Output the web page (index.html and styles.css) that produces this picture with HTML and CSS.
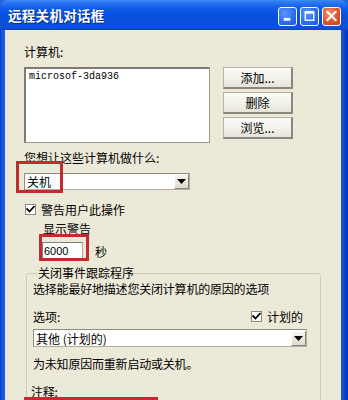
FILE: index.html
```html
<!DOCTYPE html>
<html lang="zh">
<head>
<meta charset="utf-8">
<title>远程关机对话框</title>
<link rel="stylesheet" href="styles.css">
</head>
<body>
<div class="window">
  <div class="titlebar">
    <span class="title">远程关机对话框</span>
    <div class="tbtns">
      <span class="tbtn"><svg width="18" height="18" viewBox="0 0 18 18"><rect x="5" y="11" width="7" height="3" fill="#fff"/></svg></span>
      <span class="tbtn"><svg width="18" height="18" viewBox="0 0 18 18"><rect x="4.5" y="4.5" width="9" height="9" fill="none" stroke="#fff" stroke-width="1.4"/><rect x="4.5" y="4.5" width="9" height="2" fill="#fff"/></svg></span>
      <span class="tbtn close"><svg width="18" height="18" viewBox="0 0 18 18"><path d="M4.5 4.5 L13.5 13.5 M13.5 4.5 L4.5 13.5" stroke="#fff" stroke-width="2.2" stroke-linecap="round"/></svg></span>
    </div>
  </div>
  <div class="client">
    <div class="label">计算机:</div>
    <div class="row-list">
      <div class="listbox">microsof-3da936</div>
      <div class="btncol">
        <div class="btn">添加...</div>
        <div class="btn">删除</div>
        <div class="btn">浏览...</div>
      </div>
    </div>
    <div class="label q">您想让这些计算机做什么:</div>
    <div class="select sel1"><span class="val">关机</span><span class="arrow"><svg width="9" height="5" viewBox="0 0 9 5"><path d="M0 0 H9 L4.5 5 Z" fill="#000"/></svg></span></div>
    <div class="check-row warn"><span class="cb"><svg width="9" height="8" viewBox="0 0 9 8"><path d="M0.5 3.5 L3.5 6.5 L8.5 1" stroke="#000" stroke-width="1.8" fill="none"/></svg></span><span>警告用户此操作</span></div>
    <div class="label indent">显示警告</div>
    <div class="input-row"><span class="input">6000</span><span class="sec">秒</span></div>
    <fieldset class="group">
      <legend>关闭事件跟踪程序</legend>
      <div class="gtext">选择能最好地描述您关闭计算机的原因的选项</div>
      <div class="opt-row"><span>选项:</span><span class="check-row"><span class="cb"><svg width="9" height="8" viewBox="0 0 9 8"><path d="M0.5 3.5 L3.5 6.5 L8.5 1" stroke="#000" stroke-width="1.8" fill="none"/></svg></span><span>计划的</span></span></div>
      <div class="select sel2"><span class="val">其他 (计划的)</span><span class="arrow"><svg width="9" height="5" viewBox="0 0 9 5"><path d="M0 0 H9 L4.5 5 Z" fill="#000"/></svg></span></div>
      <div class="gtext reason">为未知原因而重新启动或关机。</div>
      <div class="gtext note">注释:</div>
    </fieldset>
    <div class="redbox r1"></div>
    <div class="redbox r2"></div>
    <div class="redbox r3"></div>
  </div>
</div>
</body>
</html>
```

FILE: styles.css
```css
* { box-sizing: border-box; }
html, body { margin: 0; padding: 0; }
body {
  width: 348px;
  height: 400px;
  overflow: hidden;
  background: #2a5fd6;
  font-family: "Noto Sans CJK SC", "Noto Sans", sans-serif;
  font-size: 12px;
  color: #000;
}
.window {
  display: flex;
  flex-direction: column;
  width: 348px;
  height: 600px;
  background: linear-gradient(90deg, #0a3fc8 0, #1f5ee6 3px, #1a56df 5px, #1a56df 341px, #0c43cc 345px, #0a33b0 348px);
  border-radius: 7px 7px 0 0;
}
.titlebar {
  height: 30px;
  flex: none;
  display: flex;
  align-items: center;
  justify-content: space-between;
  padding: 0 7px 0 8px;
  border-radius: 7px 7px 0 0;
  background: linear-gradient(180deg, #3d8af7 0, #2a72f0 3px, #0c5ae8 9px, #0550e0 16px, #0a4fd8 24px, #1350d6 28px, #0b3fc0 30px);
}
.title {
  color: #fff;
  font-weight: bold;
  font-size: 13.5px;
  letter-spacing: 0.3px;
  text-shadow: 1px 1px 0 #0b2a8a;
}
.tbtns { display: flex; gap: 3px; margin-top: 2px; }
.tbtn {
  width: 19px;
  height: 19px;
  display: flex;
  align-items: center;
  justify-content: center;
  border: 1px solid #fff;
  border-radius: 3px;
  background: radial-gradient(circle at 35% 30%, #5a96ff 0, #2f6ff0 55%, #1c55d8 100%);
}
.tbtn.close {
  background: radial-gradient(circle at 35% 30%, #f0906c 0, #d9582e 55%, #c2441c 100%);
}
.client {
  position: relative;
  flex: 1;
  margin: 0 7px 0 5px;
  background: #ECE9D8;
  padding: 14px 0 0 19px;
}
.label { line-height: 16px; height: 16px; }
.row-list {
  display: flex;
  gap: 13px;
  margin-top: 7px;
  height: 76px;
}
.listbox {
  width: 186px;
  height: 76px;
  background: #fff;
  border: 1px solid #9a9a92;
  border-top: 2px solid #7d7d76;
  border-left: 2px solid #7d7d76;
  font-family: "Liberation Mono", monospace;
  font-size: 10px;
  padding: 2px 0 0 3px;
  line-height: 12px;
}
.btncol { display: flex; flex-direction: column; gap: 3px; }
.btn {
  width: 70px;
  height: 22px;
  display: flex;
  align-items: center;
  justify-content: center;
  background: linear-gradient(180deg, #fbfbf8 0, #f1f0e8 60%, #e6e4d8 100%);
  border: 1px solid #b5b3a8;
  border-right: 2px solid #8a887e;
  border-bottom: 2px solid #8a887e;
  font-size: 12px;
}
.q { margin-top: 7px; }
.select {
  display: flex;
  justify-content: space-between;
  align-items: center;
  background: #fff;
  border: 1px solid #b0ada0;
  border-top-color: #8f8d84;
  border-left-color: #8f8d84;
  padding: 0 0 0 2px;
}
.sel1 { width: 166px; height: 17px; margin-top: 7px; }
.select .val { line-height: 15px; }
.arrow {
  width: 15px;
  height: 15px;
  display: flex;
  align-items: center;
  justify-content: center;
  background: linear-gradient(180deg, #f7f6f0, #dcd9cc);
  border: 1px solid #fff;
  border-right-color: #8a887e;
  border-bottom-color: #8a887e;
}
.check-row {
  display: flex;
  align-items: center;
  gap: 5px;
}
.warn { margin-top: 12px; height: 14px; margin-left: 1px; }
.cb {
  width: 11px;
  height: 11px;
  background: #fff;
  border: 1px solid #8c8a80;
  display: flex;
  align-items: center;
  justify-content: center;
}
.indent { margin: 5px 0 0 19px; }
.input-row {
  display: flex;
  align-items: center;
  gap: 12px;
  margin: 5px 0 0 18px;
  height: 18px;
}
.input {
  width: 41px;
  height: 18px;
  background: #fff;
  border: 1px solid #b0ada0;
  border-top-color: #7f7d74;
  border-left-color: #7f7d74;
  font-family: "Liberation Sans", sans-serif;
  font-size: 11px;
  line-height: 16px;
  padding-left: 1px;
}
.group {
  margin: 5px 0 0 2px;
  width: 294px;
  height: 200px;
  border: 1px solid #cfccbd;
  border-radius: 3px;
  padding: 0 13px 0 6px;
}
.group legend {
  padding: 0;
  margin-left: 5px;
  line-height: 16px;
}
.gtext { line-height: 16px; letter-spacing: -0.2px; }
.opt-row {
  display: flex;
  justify-content: space-between;
  align-items: center;
  margin-top: 10px;
  height: 18px;
  padding-right: 4px;
}
.sel2 { width: 274px; height: 18px; margin-top: 4px; }
.reason { margin-top: 9px; }
.note { margin: 12px 0 0 -2px; }
.redbox {
  position: absolute;
  border: 3px solid #c42a30;
}
.r1 { left: 11px; top: 131px; width: 47px; height: 32px; }
.r2 { left: 34px; top: 204px; width: 50px; height: 27px; }
.r3 { left: 19px; top: 367px; width: 134px; height: 40px; }
```
